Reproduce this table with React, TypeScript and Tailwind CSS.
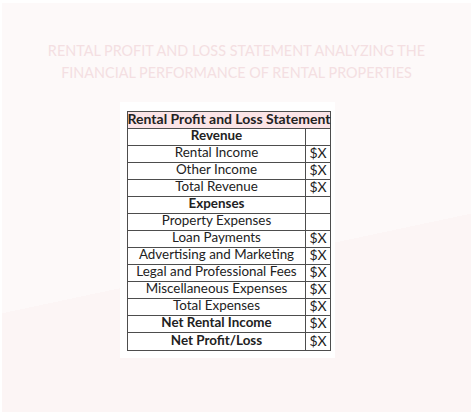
import React from "react";

type Row = { label: string; value?: string; bold?: boolean };

const rows: Row[] = [
  { label: "Revenue", bold: true },
  { label: "Rental Income", value: "$X" },
  { label: "Other Income", value: "$X" },
  { label: "Total Revenue", value: "$X" },
  { label: "Expenses", bold: true },
  { label: "Property Expenses" },
  { label: "Loan Payments", value: "$X" },
  { label: "Advertising and Marketing", value: "$X" },
  { label: "Legal and Professional Fees", value: "$X" },
  { label: "Miscellaneous Expenses", value: "$X" },
  { label: "Total Expenses", value: "$X" },
  { label: "Net Rental Income", value: "$X", bold: true },
  { label: "Net Profit/Loss", value: "$X", bold: true },
];

export default function App() {
  return (
    <div className="w-[474px] h-[415px] bg-white overflow-hidden pt-[3px] pl-[2px]">
      <div
        className="w-[469px] h-[409px] bg-[linear-gradient(168deg,#fdf9f9_61%,#fcf5f5_61%)] flex flex-col"
        style={{ fontFamily: "Lato, 'Noto Sans', sans-serif" }}
      >
        <div className="pt-[37px] text-center text-[14.4px] leading-[22px] text-[#f4dfe2] uppercase">
          <div>Rental Profit and Loss Statement Analyzing the</div>
          <div>Financial Performance of Rental Properties</div>
        </div>
        <div className="mt-[18px] ml-[118px] w-[215px] bg-white pl-[7px] pr-[4px] pt-[9px] pb-[7px]">
          <div className="w-[204px] border border-[#4d4d4d] text-[#222] text-[13.4px]">
            <div className="h-[17px] pb-[2px] border-b border-[#4d4d4d] bg-[#fbe4e7] flex items-center justify-center font-bold text-[14px] leading-none whitespace-nowrap">
              Rental Profit and Loss Statement
            </div>
            {rows.map((r, i) => (
              <div
                key={i}
                className={
                  "h-[17px] flex " +
                  (i < rows.length - 1 ? "border-b border-[#4d4d4d]" : "")
                }
              >
                <div
                  className={
                    "w-[178px] pb-[2px] border-r border-[#4d4d4d] flex items-center justify-center leading-none whitespace-nowrap " +
                    (r.bold ? "font-bold" : "")
                  }
                >
                  {r.label}
                </div>
                <div className="flex-1 pb-[2px] flex items-center justify-center leading-none text-[14px]">
                  {r.value ?? ""}
                </div>
              </div>
            ))}
          </div>
        </div>
      </div>
    </div>
  );
}
